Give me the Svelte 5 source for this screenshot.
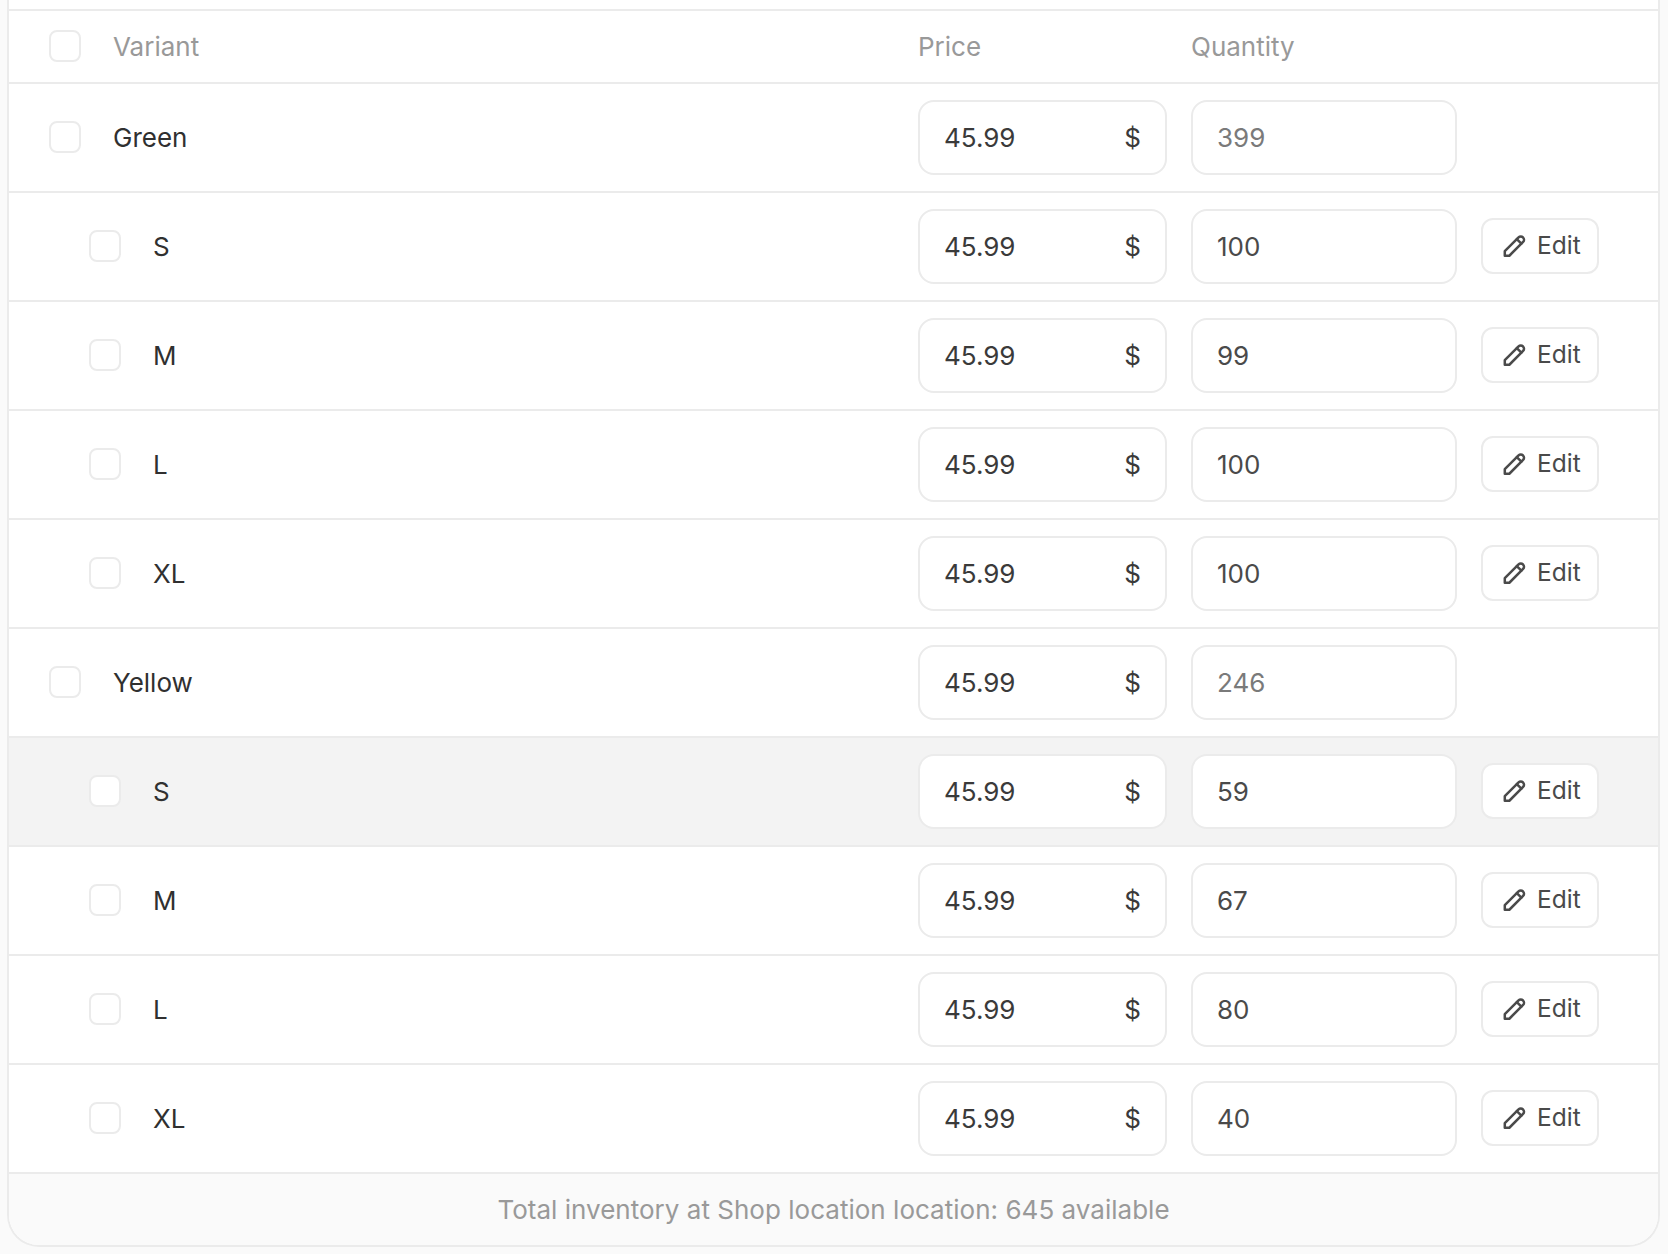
<script>
  const groups = [
    { name: "Green", total: 399, sizes: [["S", 100], ["M", 99], ["L", 100], ["XL", 100]] },
    { name: "Yellow", total: 246, sizes: [["S", 59], ["M", 67], ["L", 80], ["XL", 40]] }
  ];
  const price = "45.99";
</script>

{#snippet cells(qty, muted)}
  <div class="field price"><span>{price}</span><span>$</span></div>
  <div class="field qty" class:muted>{qty}</div>
{/snippet}

<div class="page">
  <div class="card">
    <div class="row head">
      <div class="name"><span class="check"></span><span>Variant</span></div>
      <div class="col">Price</div>
      <div class="col">Quantity</div>
    </div>
    {#each groups as group, g}
      <div class="row">
        <div class="name"><span class="check"></span><span>{group.name}</span></div>
        {@render cells(group.total, true)}
      </div>
      {#each group.sizes as [size, qty], i}
        <div class="row child" class:hover={g === 1 && i === 0}>
          <div class="name"><span class="check"></span><span>{size}</span></div>
          {@render cells(qty, false)}
          <button class="edit">
            <svg viewBox="0 0 24 24" width="26" height="26" fill="none" stroke="currentColor" stroke-width="2.3" stroke-linejoin="round" stroke-linecap="round">
              <path d="M3.5 21v-4.2L16.2 4.1a2.9 2.9 0 0 1 4.1 0l.1.1a2.9 2.9 0 0 1 0 4.1L7.7 21z" />
              <path d="M14.6 5.7l4.2 4.2" />
            </svg>
            Edit
          </button>
        </div>
      {/each}
    {/each}
    <div class="foot">Total inventory at Shop location location: 645 available</div>
  </div>
</div>

<style>
  :global(body) {
    margin: 0;
    background: #fafafa;
  }

  .page {
    height: 1254px;
    padding: 0 8px 8px 7px;
    box-sizing: border-box;
    font-family: Inter, "Liberation Sans", sans-serif;
    font-size: 26px;
    color: #303030;
  }

  .card {
    padding-top: 9px;
    background: #fff;
    border: solid #ebebeb;
    border-width: 0 2px 2px;
    border-radius: 0 0 32px 32px;
    overflow: hidden;
  }

  .row {
    display: grid;
    grid-template-columns: 1fr 249px 266px 143px;
    column-gap: 24px;
    align-items: center;
    height: 107px;
    padding: 0 34px 0 40px;
    border-top: 2px solid #ebebeb;
  }

  .head {
    height: 71px;
    color: #999;
  }

  .child {
    padding-left: 80px;
  }

  .hover {
    background: #f3f3f3;
  }

  .name {
    display: flex;
    align-items: center;
    gap: 32px;
  }

  .check {
    width: 32px;
    height: 32px;
    margin-top: -1px;
    box-sizing: border-box;
    border: 2px solid #ebebeb;
    border-radius: 8px;
    background: #fff;
  }

  .field {
    display: flex;
    align-items: center;
    height: 75px;
    padding: 0 24px;
    box-sizing: border-box;
    background: #fff;
    border: 2px solid #ebebeb;
    border-radius: 16px;
    color: #3a3a3a;
  }

  .price {
    justify-content: space-between;
    padding-right: 24px;
  }

  .qty {
    color: #4a4a4a;
  }

  .qty.muted {
    color: #7a7a7a;
  }

  .edit {
    display: flex;
    align-items: center;
    justify-content: flex-start;
    gap: 10px;
    width: 118px;
    height: 56px;
    margin-bottom: 2px;
    padding: 0 0 1px 18px;
    background: #fff;
    border: 2px solid #ebebeb;
    border-radius: 12px;
    font: inherit;
    font-size: 24.5px;
    color: #4a4a4a;
  }

  .edit svg {
    margin-top: 1px;
  }

  .foot {
    height: 71px;
    border-top: 2px solid #ebebeb;
    background: #fafafa;
    color: #999;
    line-height: 71px;
    letter-spacing: 0.02px;
    text-align: center;
  }
</style>
